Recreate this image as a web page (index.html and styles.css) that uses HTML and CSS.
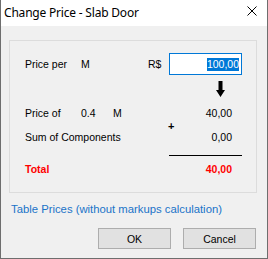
FILE: index.html
```html
<!DOCTYPE html>
<html lang="en">

<head>
    <meta charset="UTF-8">
    <meta name="viewport" content="width=device-width, initial-scale=1.0">
    <link rel="stylesheet" href="styles.css">
</head>

<body>
    <div class="window">
        <div class="title-bar">
            <span class="title-text">Change Price - Slab Door</span>
            <svg class="close-icon" width="10" height="10" viewBox="0 0 10 10">
                <path d="M0.5 0.5 L9.5 9.5 M9.5 0.5 L0.5 9.5" stroke="#000" stroke-width="1" fill="none" />
            </svg>
        </div>
        <div class="client">
            <div class="group-box">
                <div class="row row-input">
                    <span class="col-label">Price per</span>
                    <span class="col-unit">M</span>
                    <span class="col-currency">R$</span>
                    <div class="price-input"><span class="selected">100,00</span></div>
                </div>
                <div class="row row-arrow">
                    <svg class="arrow-icon" width="9" height="16" viewBox="0 0 9 16">
                        <path d="M2.5 0 H6.5 V9 H9 L4.5 16 L0 9 H2.5 Z" fill="#000" />
                    </svg>
                </div>
                <div class="row row-text">
                    <span class="col-label">Price of</span>
                    <span class="col-qty">0.4</span>
                    <span class="col-qty-unit">M</span>
                    <span class="col-amount">40,00</span>
                </div>
                <div class="row row-plus">
                    <span class="plus">+</span>
                </div>
                <div class="row row-text">
                    <span class="col-wide">Sum of Components</span>
                    <span class="col-amount">0,00</span>
                </div>
                <div class="sum-line"></div>
                <div class="row row-text total">
                    <span class="col-wide">Total</span>
                    <span class="col-amount">40,00</span>
                </div>
            </div>
            <div class="link">Table Prices (without markups calculation)</div>
            <div class="buttons">
                <button class="btn">OK</button>
                <button class="btn">Cancel</button>
            </div>
        </div>
    </div>
</body>

</html>
```

FILE: styles.css
```css
body {
    margin: 0;
    background-color: #ffffff;
}

.window {
    width: 268px;
    height: 259px;
    box-sizing: border-box;
    border: 1px solid #6e6e6e;
    border-top: none;
    display: flex;
    flex-direction: column;
    background-color: #f0f0f0;
    font-family: 'Liberation Sans', Arial, sans-serif;
    font-size: 10.5px;
    color: #000000;
}

.title-bar {
    height: 26px;
    flex-shrink: 0;
    background-color: #ffffff;
    display: flex;
    align-items: center;
    padding-left: 3px;
    padding-right: 10px;
    justify-content: space-between;
}

.title-text {
    font-family: 'Noto Sans', sans-serif;
    font-size: 12px;
    letter-spacing: -0.2px;
    margin-top: -1px;
}

.close-icon {
    margin-top: -4px;
}

.client {
    flex: 1;
    display: flex;
    flex-direction: column;
}

.group-box {
    margin: 14px 0 0 8px;
    width: 248px;
    height: 153px;
    box-sizing: border-box;
    border: 1px solid #dcdcdc;
    padding: 12px 0 0 15px;
}

.row {
    display: flex;
    align-items: center;
}

.row-input {
    height: 22px;
}

.row-text {
    height: 13px;
    line-height: 13px;
}

.col-label {
    width: 56px;
}

.col-unit {
    width: 67px;
}

.col-currency {
    width: 21px;
}

.col-qty {
    width: 32px;
}

.col-qty-unit {
    width: 56px;
}

.col-wide {
    width: 144px;
}

.col-amount {
    width: 63px;
    text-align: right;
}

.price-input {
    width: 73px;
    height: 22px;
    box-sizing: border-box;
    border: 1px solid #0078d7;
    background-color: #ffffff;
    display: flex;
    align-items: center;
    justify-content: flex-end;
    padding-right: 2px;
}

.selected {
    background-color: #0078d7;
    color: #ffffff;
    line-height: 13px;
}

.row-arrow {
    height: 16px;
    margin-top: 6px;
    margin-bottom: 10px;
    padding-left: 191px;
}

.row-plus {
    height: 11px;
    padding-left: 143px;
    align-items: flex-end;
}

.plus {
    font-weight: bold;
    font-size: 11px;
    line-height: 9px;
}

.sum-line {
    width: 73px;
    height: 1px;
    background-color: #000000;
    margin: 11px 0 7px 144px;
}

.total {
    color: #ff0000;
    font-weight: bold;
}

.link {
    color: #1a73c8;
    font-size: 11.3px;
    margin: 10px 0 0 10px;
    line-height: 13px;
}

.buttons {
    display: flex;
    justify-content: flex-end;
    gap: 12px;
    margin: 12px 11px 0 0;
}

.btn {
    width: 73px;
    height: 21px;
    border: 1px solid #adadad;
    background-color: #e1e1e1;
    font-family: 'Liberation Sans', Arial, sans-serif;
    font-size: 10.5px;
    color: #000000;
    padding: 0;
}
```
